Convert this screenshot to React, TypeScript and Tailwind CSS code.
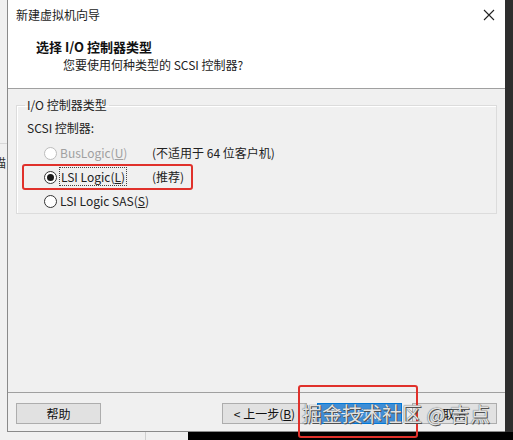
import React from 'react';

const font = "font-['Microsoft_YaHei','Noto_Sans_CJK_SC',sans-serif]";

const Radio = ({ checked = false, disabled = false }: { checked?: boolean; disabled?: boolean }) => (
  <span
    className={`flex h-[13px] w-[13px] shrink-0 items-center justify-center rounded-full border bg-white ${
      disabled ? 'border-[#bcbcbc]' : 'border-[#333]'
    }`}
  >
    {checked && <span className="h-[7px] w-[7px] rounded-full bg-[#1a1a1a]" />}
  </span>
);

const Button = ({
  children,
  primary = false,
  className = '',
}: {
  children: React.ReactNode;
  primary?: boolean;
  className?: string;
}) => (
  <div
    className={`flex h-[21px] w-[85px] items-center justify-center border text-[12px] ${
      primary ? 'border-[#0078d7] bg-[#3f8ed6] text-[#eaf3fb]' : 'border-[#adadad] bg-[#e1e1e1] text-[#111]'
    } ${className}`}
  >
    {children}
  </div>
);

const App = () => {
  return (
    <div className={`relative flex h-[440px] w-[513px] flex-col overflow-hidden bg-[#f0f0f0] ${font}`}>
      <div className="flex h-[432px]">
        {/* window behind */}
        <div className="relative w-[7px] overflow-hidden bg-[#f0f0f0]">
          <div className="mt-[143px] h-px w-full bg-[#d8d8d8]" />
          <div className="ml-[-6px] mt-[12px] text-[12px] leading-[14px] text-[#333]">描</div>
        </div>

        {/* dialog */}
        <div className="flex w-[498px] flex-col border-b border-l border-[#8a8a8a] bg-[#f0f0f0]">
          <div className="h-[89px] border-b border-[#a0a0a0] bg-white">
            <div className="flex h-[30px] items-center justify-between pl-[8px] pr-[8px]">
              <span className="text-[12px] text-[#222]">新建虚拟机向导</span>
              <svg width="14" height="14" viewBox="0 0 14 14" className="mr-[1px]">
                <path d="M2 2 L12 12 M12 2 L2 12" stroke="#222" strokeWidth="1.1" />
              </svg>
            </div>
            <div className="mt-[9px] pl-[28px] text-[13px] font-bold leading-[16px] text-[#111]">
              选择 I/O 控制器类型
            </div>
            <div className="mt-[2px] pl-[55px] text-[12px] leading-[16px] text-[#222]">
              您要使用何种类型的 SCSI 控制器?
            </div>
          </div>

          <div className="flex-1">
            <fieldset className="ml-[8px] mt-[8px] h-[117px] w-[481px] border border-[#dcdcdc] pl-[8px] shadow-[inset_1px_1px_0_#fff]">
              <legend className="px-[2px] text-[12px] leading-[16px] text-[#222]">I/O 控制器类型</legend>
              <div className="ml-[2px] mt-[7px] text-[12px] leading-[16px] text-[#222]">SCSI 控制器:</div>
              <div className="mt-[5px] flex h-[24px] items-center pl-[19px] text-[12px]">
                <Radio disabled />
                <span className="ml-[3px] w-[92px] text-[#a0a0a0]">
                  BusLogic(<span className="underline">U</span>)
                </span>
                <span className="text-[#222]">(不适用于 64 位客户机)</span>
              </div>
              <div className="flex h-[24px] items-center pl-[19px] text-[12px] text-[#222]">
                <Radio checked />
                <span className="ml-[2px] w-[93px]">
                  <span className="border border-dotted border-[#444] px-px">
                    LSI Logic(<span className="underline">L</span>)
                  </span>
                </span>
                <span>(推荐)</span>
              </div>
              <div className="flex h-[24px] items-center pl-[19px] text-[12px] text-[#222]">
                <Radio />
                <span className="ml-[3px]">
                  LSI Logic SAS(<span className="underline">S</span>)
                </span>
              </div>
            </fieldset>
          </div>

          <div className="flex h-[39px] items-start border-t border-[#a0a0a0] pt-[10px]">
            <Button className="ml-[8px]">帮助</Button>
            <div className="ml-auto mr-[8px] flex gap-[10px]">
              <Button>&lt; 上一步(<span className="underline">B</span>)</Button>
              <Button primary>下一步(N) &gt;</Button>
              <Button>取消</Button>
            </div>
          </div>
        </div>

        {/* desktop at right */}
        <div className="w-[8px] bg-[#2e2e2e]" />
      </div>

      <div className="flex h-[8px]">
        <div className="w-[145px] bg-[#f0f0f0]" />
        <div className="w-px bg-[#cfcfcf]" />
        <div className="w-[42px] bg-[#f0f0f0]" />
        <div className="flex-1 bg-black" />
      </div>

      {/* annotations */}
      <div className="absolute left-[22px] top-[164px] h-[26px] w-[171px] rounded-[3px] border-2 border-[#e0312b]" />
      <div className="absolute left-[298px] top-[385px] h-[53px] w-[120px] rounded-[3px] border-2 border-[#e0312b]" />
      <div className="absolute left-[302px] top-[400px] whitespace-nowrap text-[20px] leading-[28px] text-[#e2e2e2] [text-shadow:0_0_1px_#333,1px_1px_0_#555]">
        掘金技术社区 @ 吉点
      </div>
    </div>
  );
};

export default App;
